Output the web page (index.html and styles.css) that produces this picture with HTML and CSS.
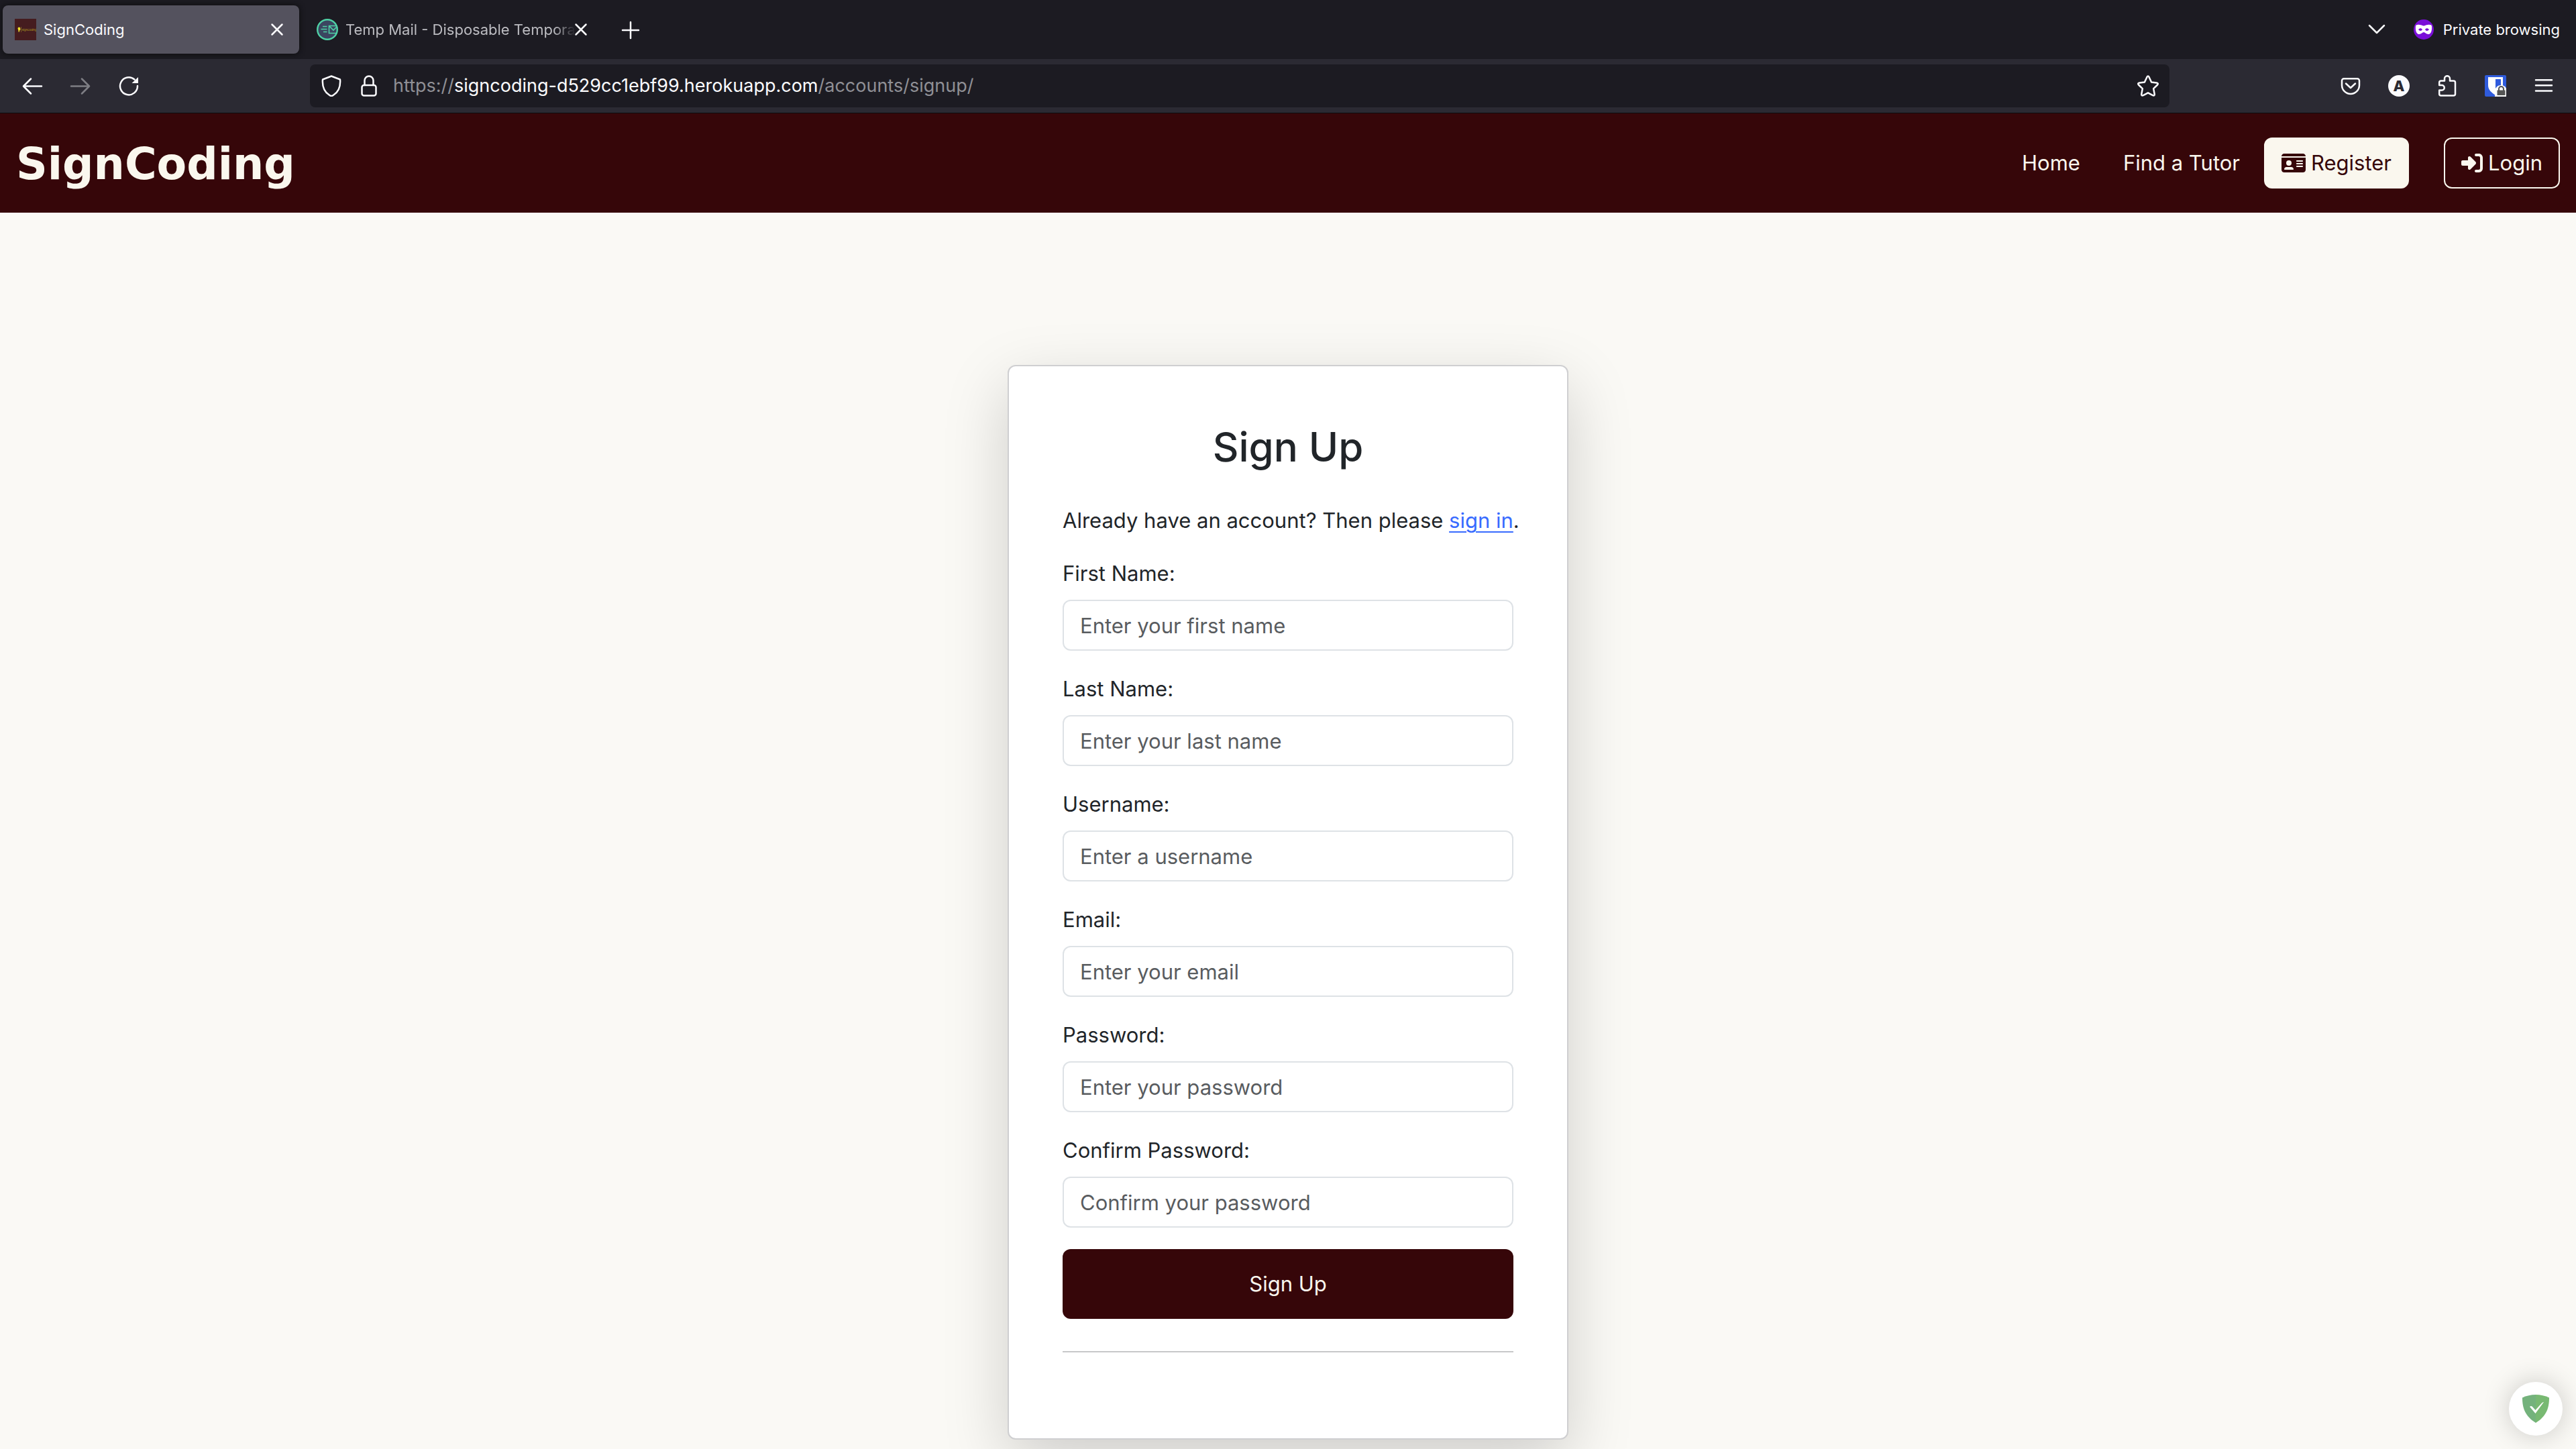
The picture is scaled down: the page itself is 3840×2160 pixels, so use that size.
FILE: index.html
```html
<!DOCTYPE html>
<html lang="en">
<head>
<meta charset="utf-8">
<title>SignCoding</title>
<link rel="stylesheet" href="styles.css">
</head>
<body>
<div class="browser">
  <div class="tabs">
    <div class="tab tab-active">
      <svg class="icon" viewBox="0 0 32 32" aria-hidden="true"><rect width="32" height="32" fill="#451c1f"/><path d="M4.500 14.500a1.900 1.900 0 0 1 3.800 0v2l-1.300 1v2h-1.500v-2z" fill="#f2e32b"/><path d="M9.500 12v8" stroke="#7a5a22" stroke-width="1"/><text x="10.500" y="17.500" class="favicon-text">SignCoding</text></svg>
      <span class="tab-title">SignCoding</span>
      <button class="tab-close" aria-label="Close tab"><svg class="icon" viewBox="0 0 32 32"><path d="M8.500 8.500l15 15M23.500 8.500l-15 15" class="line"/></svg></button>
    </div>
    <div class="tab">
      <svg class="icon" viewBox="0 0 32 32" aria-hidden="true"><circle cx="16" cy="16" r="14.800" fill="#3b4660" stroke="#4fd1a5" stroke-width="2.400"/><g fill="none" stroke="#4fd1a5" stroke-width="1.600"><path d="M29 10.500H18.500v11H29M19 11l6 6 5-5M9 11.500h6.500M6.500 15.500h9M10 19.500h5.500"/></g></svg>
      <span class="tab-title tab-title-fade">Temp Mail - Disposable Tempora</span>
      <button class="tab-close" aria-label="Close tab"><svg class="icon" viewBox="0 0 32 32"><path d="M8.500 8.500l15 15M23.500 8.500l-15 15" class="line"/></svg></button>
    </div>
    <button class="tool" aria-label="New tab"><svg class="icon" viewBox="0 0 32 32"><path d="M16 5v24M4 17h24" class="line"/></svg></button>
    <div class="tabs-end">
      <button class="tool" aria-label="List all tabs"><svg class="icon" viewBox="0 0 32 32"><path d="M5 10l11 11 11-11" class="line"/></svg></button>
      <div class="private">
        <svg class="icon" viewBox="0 0 32 32" aria-hidden="true"><circle cx="16" cy="16" r="15" fill="#7a0fd8"/><path fill="#fff" fill-rule="evenodd" d="M4 11c0-2 3-2.500 6-2 3 .3 4 1.500 6 1.500s3-1.200 6-1.500c3-.5 6 0 6 2 .5 5-.5 12-5 12-3.500 0-5-3-7-3s-3.500 3-7 3c-4.500 0-5.500-7-5-12zM8 16c2 2.500 4.500 2.500 6 0-1.500-2.500-4-2.500-6 0zM18 16c1.500 2.500 4 2.500 6 0-2-2.500-4.500-2.500-6 0z"/></svg>
        <span>Private browsing</span>
      </div>
    </div>
  </div>
  <div class="toolbar">
    <button class="tool" aria-label="Back"><svg class="icon" viewBox="0 0 32 32"><path d="M3 16.500h27M14 5.500l-11 11 11 11" class="line"/></svg></button>
    <button class="tool tool-off" aria-label="Forward"><svg class="icon" viewBox="0 0 32 32"><path d="M29 16.500H2M18 5.500l11 11-11 11" class="line"/></svg></button>
    <button class="tool" aria-label="Reload"><svg class="icon" viewBox="0 0 32 32"><path d="M29 16a13 13 0 1 1-4.500-9.500" class="line"/><path d="M30 3v9h-9.500z" fill="#fbfbfe"/></svg></button>
    <div class="address">
      <button class="address-icon" aria-label="Tracking protection"><svg class="icon" viewBox="0 0 32 32"><path d="M16 1.500L29 6.500c.8 10-1.500 18-10 23.300a5 5 0 0 1-6 0C4.500 24.500 2.200 16.500 3 6.500z" class="line"/></svg></button>
      <button class="address-icon" aria-label="Site information"><svg class="icon" viewBox="0 0 32 32"><rect x="5.500" y="15" width="21" height="15.500" rx="3" class="line"/><path d="M9.500 15V8a6.500 6.500 0 0 1 13 0v7" class="line"/></svg></button>
      <div class="url" role="textbox" aria-label="Address">https://<span class="url-host">signcoding-d529cc1ebf99.herokuapp.com</span>/accounts/signup/</div>
      <button class="address-icon" aria-label="Bookmark"><svg class="icon" viewBox="0 0 32 32"><path d="M14.300 3.200q1.700-3.200 3.400 0l3.400 7.300 7.900 1q3 .6 1 3l-5.800 5.600 1.500 8.200q.3 3-2.600 1.900L16 26.300l-7.100 3.900q-2.900 1.100-2.600-1.900l1.500-8.200L2 14.500q-2-2.400 1-3l7.900-1z" class="line"/></svg></button>
    </div>
    <button class="tool" aria-label="Pocket"><svg class="icon" viewBox="0 0 32 32"><path d="M6 5.200h20a3 3 0 0 1 3 3V15a13 13 0 0 1-26 0V8.200a3 3 0 0 1 3-3z" class="line"/><path d="M9 12.500l7 6.500 7-6.500" class="line"/></svg></button>
    <button class="tool" aria-label="Account"><span class="account">A</span></button>
    <button class="tool" aria-label="Extensions"><svg class="icon" viewBox="0 0 32 32"><path d="M4.200 15v-4a2.500 2.500 0 0 1 2.500-2.500H12V5.200a4 4 0 0 1 8 0v3.300h5.500A2.500 2.500 0 0 1 28 11v17a2.500 2.500 0 0 1-2.500 2.500H6.700A2.500 2.500 0 0 1 4.200 28v-5.500H8a3.750 3.750 0 0 0 0-7.500z" class="line"/></svg></button>
    <button class="tool" aria-label="Password manager"><svg class="icon" viewBox="0 0 32 32"><rect width="32" height="32" rx="2" fill="#2f5bdc"/><path d="M5 3h22v12c0 7-5 11-11 15C10 26 5 22 5 15z" fill="#fff"/><path d="M16 6h8v10c0 4-4 7-8 10z" fill="#2f5bdc"/><path d="M15 32V23q2-8 9-8 6 0 8 5v12z" fill="#fff"/><path d="M18.500 22.500h12V30h-12z" fill="#555"/><path d="M21 23v-2.500a3.500 3.500 0 0 1 7 0V23" fill="none" stroke="#555" stroke-width="2"/></svg></button>
    <button class="tool" aria-label="Menu"><svg class="icon" viewBox="0 0 32 32"><path d="M4 7.200h24M4 15.300h24M4 23.500h24" class="line"/></svg></button>
  </div>
</div>

<header class="site-header">
  <a class="brand" href="#">SignCoding</a>
  <nav class="site-nav">
    <a class="nav-link" href="#">Home</a>
    <a class="nav-link" href="#">Find a Tutor</a>
    <a class="nav-button nav-button-filled" href="#"><svg class="id-icon" viewBox="0 32 576 448" aria-hidden="true"><path fill="currentColor" fill-rule="evenodd" d="M0 96h576c0-35.300-28.700-64-64-64H64C28.700 32 0 60.700 0 96zm0 32v288c0 35.300 28.700 64 64 64h448c35.300 0 64-28.700 64-64V128zM64 405.300c0-29.500 23.900-53.300 53.300-53.300h117.400c29.500 0 53.300 23.900 53.300 53.300 0 5.900-4.800 10.700-10.700 10.700H74.700c-5.900 0-10.700-4.800-10.700-10.700zM176 192a64 64 0 1 1 0 128 64 64 0 1 1 0-128zm176 16c0-8.800 7.200-16 16-16h128c8.800 0 16 7.200 16 16s-7.200 16-16 16H368c-8.800 0-16-7.200-16-16zm0 64c0-8.800 7.200-16 16-16h128c8.800 0 16 7.200 16 16s-7.200 16-16 16H368c-8.800 0-16-7.200-16-16zm0 64c0-8.800 7.200-16 16-16h128c8.800 0 16 7.200 16 16s-7.200 16-16 16H368c-8.800 0-16-7.200-16-16z"/></svg>Register</a>
    <a class="nav-button" href="#"><svg class="login-icon" viewBox="0 32 512 448" aria-hidden="true"><path fill="currentColor" d="M217.900 105.900L340.700 228.700c7.200 7.200 11.300 17.100 11.300 27.300s-4.100 20.100-11.300 27.300L217.900 406.100c-6.400 6.400-15 9.900-24 9.900-18.700 0-33.900-15.200-33.900-33.900V320H32c-17.700 0-32-14.300-32-32v-64c0-17.700 14.300-32 32-32h128v-62.100c0-18.700 15.200-33.900 33.900-33.900 9 0 17.600 3.600 24 9.900zM352 416h64c17.700 0 32-14.300 32-32V128c0-17.700-14.300-32-32-32h-64c-17.700 0-32-14.300-32-32s14.300-32 32-32h64c53 0 96 43 96 96v256c0 53-43 96-96 96h-64c-17.700 0-32-14.300-32-32s14.300-32 32-32z"/></svg>Login</a>
  </nav>
</header>

<main class="page">
  <section class="card">
    <h1 class="card-title">Sign Up</h1>
    <p class="card-lead">Already have an account? Then please <a class="link" href="#">sign in</a>.</p>
    <form class="form">
      <div class="field"><label for="first">First Name:</label><input id="first" type="text" placeholder="Enter your first name"></div>
      <div class="field"><label for="last">Last Name:</label><input id="last" type="text" placeholder="Enter your last name"></div>
      <div class="field"><label for="user">Username:</label><input id="user" type="text" placeholder="Enter a username"></div>
      <div class="field"><label for="email">Email:</label><input id="email" type="email" placeholder="Enter your email"></div>
      <div class="field"><label for="pass">Password:</label><input id="pass" type="password" placeholder="Enter your password"></div>
      <div class="field"><label for="confirm">Confirm Password:</label><input id="confirm" type="password" placeholder="Confirm your password"></div>
      <button class="submit" type="submit">Sign Up</button>
    </form>
    <hr class="rule">
  </section>
</main>

<button class="guard" aria-label="Protection status"><svg class="guard-icon" viewBox="0 0 40 42"><path d="M20 0C13 0 6 1.500 0 4.500 0 20 4 32 20 42z" fill="#74b27c"/><path d="M20 0c7 0 14 1.500 20 4.500C40 20 36 32 20 42z" fill="#78b972"/><path d="M11 18q2-2 4 0l4.500 5L29 12.500q2-2 3-1.500L19.500 28z" fill="#fff"/></svg></button>
</body>
</html>
```
FILE: styles.css
```css
* { box-sizing: border-box; }
body {
  margin: 0;
  min-height: 100vh;
  display: flex;
  flex-direction: column;
  background: #faf9f5;
  color: #212529;
  font: 31px/48px Inter, "Liberation Sans", sans-serif;
  overflow: hidden;
}
button { border: 0; padding: 0; background: none; font: inherit; color: inherit; }

/* Browser chrome */
.browser { background: #2b2a33; color: #fbfbfe; border-bottom: 1px solid #0c0c0d; }
.icon { width: 32px; height: 32px; flex: none; display: block; }
.line { fill: none; stroke: currentColor; stroke-width: 2.500; stroke-linecap: round; stroke-linejoin: round; }
.tabs { display: flex; align-items: center; gap: 8px; padding: 8px 24px 8px 4px; background: #1c1b22; font-size: 22px; }
.tab { display: flex; align-items: center; width: 442px; height: 72px; padding: 0 17px 0 18px; border-radius: 8px; color: #bbbbc0; }
.tab-active { background: #54525e; color: #fbfbfe; box-shadow: 0 0 8px #0c0c0d; }
.favicon-text { fill: #b8a820; font-family: Inter, sans-serif; font-size: 4px; }
.tab-title { flex: 1; padding-left: 11px; line-height: 36px; white-space: nowrap; }
.tab-title-fade { -webkit-mask-image: linear-gradient(to left, transparent, #000 32px); mask-image: linear-gradient(to left, transparent, #000 32px); }
.tab-close { margin-left: -8px; color: #fbfbfe; }
.tool { display: flex; align-items: center; justify-content: center; width: 72px; height: 64px; flex: none; }
.tool-off { opacity: .4; }
.tabs-end { display: flex; align-items: center; gap: 18px; margin-left: auto; }
.private { display: flex; align-items: center; gap: 13px; }
.toolbar { display: flex; align-items: center; padding: 8px 12px; }
.address { flex: 1; display: flex; align-items: center; height: 64px; margin: 0 234px; padding: 0 4px; border-radius: 8px; background: #1c1b22; }
.address-icon { display: flex; align-items: center; justify-content: center; width: 56px; height: 56px; }
.url { flex: 1; padding-left: 8px; font-size: 27px; color: #8f8f95; }
.url-host { color: #fbfbfe; }
.account { width: 32px; height: 32px; border-radius: 50%; background: #fbfbfe; color: #2b2a33; font-size: 22px; line-height: 32px; font-weight: 800; }

/* Site header */
.site-header { display: flex; align-items: center; justify-content: space-between; padding: 34px 24px; background: #360609; color: #faf7ee; }
.site-header a { color: inherit; text-decoration: none; }
.brand { padding-top: 4px; font: bold 65px/76px "DejaVu Sans", sans-serif; }
.site-nav { display: flex; align-items: center; }
.nav-link { padding: 0 32px; }
.nav-link + .nav-button { margin-left: 4px; }
.nav-button { display: flex; align-items: center; gap: 8px; padding: 12px 24px; border: 2px solid #faf7ee; border-radius: 12px; }
.nav-button + .nav-button { margin-left: 52px; }
.site-header .nav-button-filled { background: #faf7ee; color: #360609; }
.id-icon { width: 36px; height: 28px; }
.login-icon { width: 32px; height: 28px; }

/* Sign-up card */
.page { flex: 1; padding: 227px 24px 14px; display: flex; justify-content: center; align-items: flex-start; }
.card { width: 836px; padding: 80px; border: 2px solid #cfcfd1; border-radius: 12px; background: #fff; box-shadow: 0 32px 96px rgba(0, 0, 0, .175); }
.card-title { margin: 0 0 46px; font-size: 60px; line-height: 80px; font-weight: 500; text-align: center; }
.card-lead { margin: 0 0 30px; white-space: nowrap; }
.link { color: #386bff; text-underline-offset: 5px; text-decoration-thickness: 2px; }
.form { display: flex; flex-direction: column; gap: 32px; }
.field { display: flex; flex-direction: column; gap: 14px; line-height: 50px; }
.field input { width: 100%; height: 76px; padding: 0 24px; border: 2px solid #dee2e6; border-radius: 12px; background: #fff; font: inherit; color: #212529; }
.field input::placeholder { color: #595c5f; opacity: 1; }
.submit { height: 104px; border-radius: 12px; background: #360609; color: #faf7ee; }
.rule { margin: 48px 0; border: 0; height: 2px; background: #c7c8c9; }

/* Floating badge */
.guard { position: fixed; right: 20px; bottom: 20px; width: 80px; height: 80px; border-radius: 50%; background: #fff; box-shadow: 0 0 40px rgba(0, 0, 0, .2); display: flex; align-items: center; justify-content: center; }
.guard-icon { width: 40px; height: 42px; }
```
